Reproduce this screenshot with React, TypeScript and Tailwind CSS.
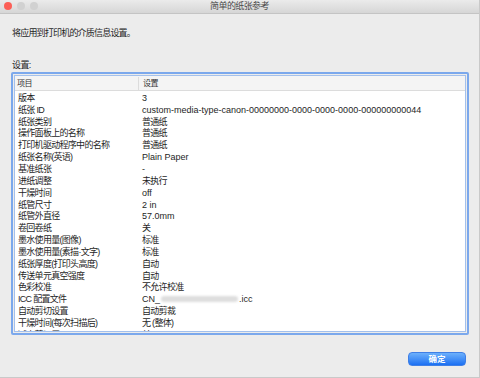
import React from "react";

const rows: [string, string][] = [
  ["版本", "3"],
  ["纸张 ID", "custom-media-type-canon-00000000-0000-0000-0000-000000000044"],
  ["纸张类别", "普通纸"],
  ["操作面板上的名称", "普通纸"],
  ["打印机驱动程序中的名称", "普通纸"],
  ["纸张名称(英语)", "Plain Paper"],
  ["基准纸张", "-"],
  ["进纸调整", "未执行"],
  ["干燥时间", "off"],
  ["纸管尺寸", "2 in"],
  ["纸管外直径", "57.0mm"],
  ["卷回卷纸", "关"],
  ["墨水使用量(图像)", "标准"],
  ["墨水使用量(素描·文字)", "标准"],
  ["纸张厚度(打印头高度)", "自动"],
  ["传送单元真空强度", "自动"],
  ["色彩校准", "不允许校准"],
  ["ICC 配置文件", "ICC"],
  ["自动剪切设置", "自动剪裁"],
  ["干燥时间(每次扫描后)", "无 (整体)"],
  ["减少剪切屑", "关"],
];

const isLatin = (s: string) => /[a-z0-9]/i.test(s) && !/[\u4e00-\u9fff]/.test(s);

export default function App() {
  return (
    <div
      className="flex h-[378px] w-[480px] flex-col overflow-hidden border-r border-b border-[#c9c9c9] bg-[#ececec] text-[9px] text-[#1e1e1e]"
      style={{ fontFamily: '"Liberation Sans", "Noto Sans CJK SC", sans-serif' }}
    >
      <div className="relative flex h-[14px] shrink-0 items-center justify-center border-b border-[#c4c4c4] bg-gradient-to-b from-[#ebebeb] to-[#d6d6d6]">
        <div className="absolute left-[4px] top-[2px] flex gap-[5px]">
          <span className="h-[8px] w-[8px] rounded-full bg-[#fc5f57]" />
          <span className="h-[8px] w-[8px] rounded-full bg-[#d1d1d1]" />
          <span className="h-[8px] w-[8px] rounded-full bg-[#d1d1d1]" />
        </div>
        <span className="text-[9px] leading-none tracking-[-0.6px] text-[#4b4b4b]">简单的纸张参考</span>
      </div>

      <div className="flex flex-1 flex-col px-[11px]">
        <p className="mt-[13px] pl-[1px] leading-[12px] tracking-[-0.8px]">将应用到打印机的介质信息设置。</p>
        <p className="mt-[20px] pl-[1px] leading-[12px] tracking-[-0.6px]">设置:</p>

        <div className="mt-[1px] h-[263px] w-[458px] rounded-[2px] border-2 border-[#7ba8ec] p-[1px]">
          <div className="h-full overflow-hidden border border-[#a3c0ec] bg-white">
            <div className="flex h-[15px] items-center border-b border-[#dcdcdc] bg-[#f4f4f4] text-[8px] tracking-[-0.5px] text-[#333]">
              <span className="w-[124px] border-r border-[#dcdcdc] pl-[2px] leading-[13px]">项目</span>
              <span className="pl-[4px] leading-[13px]">设置</span>
            </div>
            <div className="pt-[1px]">
              {rows.map(([k, v]) => (
                <div key={k} className="flex h-[11.85px] items-center leading-[12px]">
                  <span className="w-[127px] shrink-0 pl-[3px] tracking-[-0.7px]">{k}</span>
                  {v === "ICC" ? (
                    <span className="flex items-center">
                      CN_
                      <span className="mx-[1px] h-[6px] w-[77px] rounded-full bg-[#dedede] blur-[1px]" />
                      .icc
                    </span>
                  ) : (
                    <span className={isLatin(v) ? "" : "tracking-[-0.7px]"}>{v}</span>
                  )}
                </div>
              ))}
            </div>
          </div>
        </div>

        <div className="mt-[17px] flex justify-end pr-[2px]">
          <button
            type="button"
            className="h-[14px] w-[58px] rounded-[4px] border border-[#3f7fe6] bg-gradient-to-b from-[#6cb0fb] to-[#1a6ff2] text-[8.5px] font-bold leading-none text-white"
          >
            确定
          </button>
        </div>
      </div>
    </div>
  );
}
